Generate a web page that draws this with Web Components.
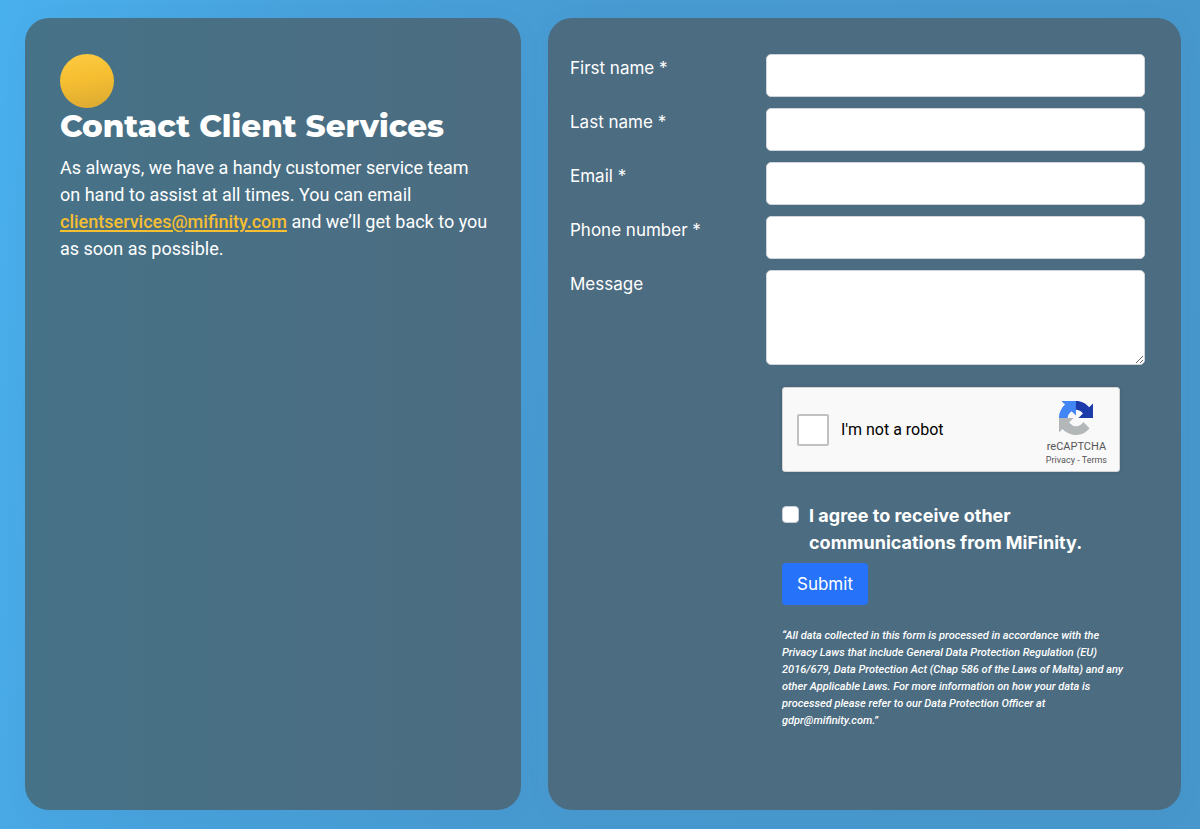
<!DOCTYPE html>
<html lang="en">
<head>
<meta charset="utf-8">
<meta name="viewport" content="width=device-width, initial-scale=1">
<title>Contact Client Services</title>
<style>
  body {
    margin: 0;
    font: 18px/27px Roboto, "Liberation Sans", sans-serif;
    color: #fff;
    --ui-font: Inter, "Liberation Sans", sans-serif;
    --gold: #f6be31;
  }
</style>
</head>
<body>
<contact-page>
  <contact-intro slot="intro" heading="Contact Client Services">
    As always, we have a handy customer service team on hand to assist at all times. You can email
    <a href="mailto:clientservices@mifinity.com">clientservices@mifinity.com</a> and we’ll get back to you as soon as possible.
  </contact-intro>
  <contact-form slot="form"></contact-form>
</contact-page>

<script>
const define = (name, html, setup) => {
  const template = document.createElement('template');
  template.innerHTML = html;
  customElements.define(name, class extends HTMLElement {
    constructor() {
      super();
      this.attachShadow({ mode: 'open' }).append(template.content.cloneNode(true));
    }
    connectedCallback() {
      if (setup) setup(this, this.shadowRoot);
    }
  });
};

define('contact-page', `
  <style>
    :host {
      display: grid;
      grid-template-columns: minmax(0, 496fr) minmax(0, 633fr);
      gap: 27px;
      box-sizing: border-box;
      min-height: 100vh;
      padding: 18px 19px 19px 25px;
      background: linear-gradient(100deg, #49b0ee 0%, #48a2dc 22%, #479ad0 50%, #4797cc 100%);
    }
    section {
      box-sizing: border-box;
      border-radius: 24px;
      box-shadow: 0 4px 24px rgba(60, 110, 160, .06);
      background: #4c6c81;
    }
    .intro {
      padding: 36px 30px 36px 35px;
      background: linear-gradient(90deg, #467287, #4c6c81);
    }
    .form { padding: 36px 36px 36px 22px; }
  </style>
  <section class="intro"><slot name="intro"></slot></section>
  <section class="form"><slot name="form"></slot></section>
`);

define('contact-intro', `
  <style>
    :host { display: block; }
    .dot {
      width: 54px;
      height: 54px;
      border-radius: 50%;
      background: linear-gradient(170deg, #fdcb42, #f6be31 45%, #d9a932);
    }
    h1 {
      margin: 0 0 10px;
      font: 800 31px/36px Montserrat, Inter, sans-serif;
    }
    p { margin: 0; }
    ::slotted(a) {
      color: var(--gold);
      font-weight: 500;
      text-decoration-thickness: 2px;
      text-underline-offset: 2px;
    }
  </style>
  <div class="dot"></div>
  <h1></h1>
  <p><slot></slot></p>
`, (host, root) => {
  root.querySelector('h1').textContent = host.getAttribute('heading');
});

define('form-field', `
  <style>
    :host {
      display: grid;
      grid-template-columns: minmax(0, 196fr) minmax(0, 379fr);
      font-family: var(--ui-font);
      font-size: 17px;
    }
    label { padding-top: 1px; }
    input, textarea {
      display: block;
      box-sizing: border-box;
      width: 100%;
      height: 43px;
      margin: 0;
      padding: 6px 14px;
      border: 1px solid #ced4da;
      border-radius: 5px;
      background: #fff;
      font: inherit;
      color: #212529;
    }
    textarea { height: 95px; resize: vertical; }
  </style>
  <label for="control"></label>
`, (host, root) => {
  if (root.getElementById('control')) return;
  const type = host.getAttribute('type');
  const control = document.createElement(type === 'textarea' ? 'textarea' : 'input');
  if (type !== 'textarea') control.type = type;
  control.id = 'control';
  control.required = host.hasAttribute('required');
  root.querySelector('label').textContent =
    host.getAttribute('label') + (control.required ? ' *' : '');
  root.append(control);
});

define('robot-check', `
  <style>
    :host {
      display: flex;
      align-items: center;
      box-sizing: border-box;
      max-width: 338px;
      height: 85px;
      padding: 0 12px 0 14px;
      border: 1px solid #d3d3d3;
      border-radius: 3px;
      background: #f9f9f9;
      box-shadow: 0 0 4px rgba(0, 0, 0, .1);
      font: 16px/20px Roboto, sans-serif;
      color: #000;
    }
    input {
      appearance: none;
      box-sizing: border-box;
      flex: none;
      width: 32px;
      height: 32px;
      margin: 0 12px 0 0;
      border: 2px solid #c1c1c1;
      border-radius: 2px;
      background: #fff;
    }
    label { flex: 1; }
    .brand {
      display: flex;
      flex-direction: column;
      align-items: center;
      padding-top: 7px;
      font-size: 11px;
      line-height: 15px;
      color: #555;
    }
    svg { width: 34px; height: 34px; margin-bottom: 4px; }
    .links { font-size: 9px; line-height: 12px; }
    a { color: inherit; text-decoration: none; }
  </style>
  <input type="checkbox" id="robot"><label for="robot">I'm not a robot</label>
  <div class="brand">
    <svg viewBox="0 0 64 64" aria-hidden="true">
      <path fill="#1c3aa9" d="M64 31.955l-.033-1.37V4.687l-7.16 7.16C50.948 4.674 42.033.093 32.05.093c-10.4 0-19.622 4.96-25.458 12.64l11.736 11.86a15.55 15.55 0 0 1 4.754-5.334c2.05-1.6 4.952-2.906 8.968-2.906.485 0 .86.057 1.135.163 4.976.393 9.288 3.14 11.828 7.124l-8.307 8.307L64 31.953"/>
      <path fill="#4285f4" d="M31.862.094l-1.37.033H4.594l7.16 7.16C4.58 13.147 0 22.06 0 32.046c0 10.4 4.96 19.622 12.64 25.458L24.5 45.768a15.55 15.55 0 0 1-5.334-4.754c-1.6-2.05-2.906-4.952-2.906-8.968 0-.485.057-.86.163-1.135.393-4.976 3.14-9.288 7.124-11.828l8.307 8.307L31.86.095"/>
      <path fill="#b4b7b7" d="M.001 32.045l.033 1.37v25.898l7.16-7.16c5.86 7.173 14.774 11.754 24.76 11.754 10.4 0 19.622-4.96 25.458-12.64l-11.736-11.86a15.55 15.55 0 0 1-4.754 5.334c-2.05 1.6-4.952 2.906-8.968 2.906-.485 0-.86-.057-1.135-.163-4.976-.393-9.288-3.14-11.828-7.124l8.307-8.307c-10.522.04-22.4.066-27.295-.005"/>
    </svg>
    <div>reCAPTCHA</div>
    <div class="links"><a href="#privacy">Privacy</a> - <a href="#terms">Terms</a></div>
  </div>
`);

define('contact-form', `
  <style>
    :host { display: block; font-family: var(--ui-font); }
    form { display: grid; gap: 11px; }
    .after {
      display: grid;
      grid-template-columns: minmax(0, 212fr) minmax(0, 363fr);
      margin-top: 11px;
    }
    .after > div { grid-column: 2; }
    .consent {
      display: flex;
      gap: 10px;
      max-width: 320px;
      margin: 30px 0 7px;
      font-weight: 700;
    }
    .consent input {
      appearance: none;
      box-sizing: border-box;
      flex: none;
      width: 17px;
      height: 17px;
      margin: 4px 0 0;
      border: 1px solid #c8ced4;
      border-radius: 4px;
      background: #fff;
    }
    button {
      height: 42px;
      padding: 0 15px;
      border: 0;
      border-radius: 4px;
      background: #2673fa;
      color: #fff;
      font: inherit;
      font-size: 17px;
    }
    .legal {
      max-width: 352px;
      margin: 22px 0 0;
      font: italic 500 11px/17px Roboto, sans-serif;
    }
  </style>
  <form>
    <form-field label="First name" type="text" required></form-field>
    <form-field label="Last name" type="text" required></form-field>
    <form-field label="Email" type="email" required></form-field>
    <form-field label="Phone number" type="tel" required></form-field>
    <form-field label="Message" type="textarea"></form-field>
    <div class="after">
      <div>
        <robot-check></robot-check>
        <div class="consent">
          <input type="checkbox" id="consent">
          <label for="consent">I agree to receive other communications from MiFinity.</label>
        </div>
        <button type="submit">Submit</button>
        <p class="legal">“All data collected in this form is processed in accordance with the Privacy Laws that include General Data Protection Regulation (EU) 2016/679, Data Protection Act (Chap 586 of the Laws of Malta) and any other Applicable Laws. For more information on how your data is processed please refer to our Data Protection Officer at gdpr@mifinity.com.”</p>
      </div>
    </div>
  </form>
`);
</script>
</body>
</html>
